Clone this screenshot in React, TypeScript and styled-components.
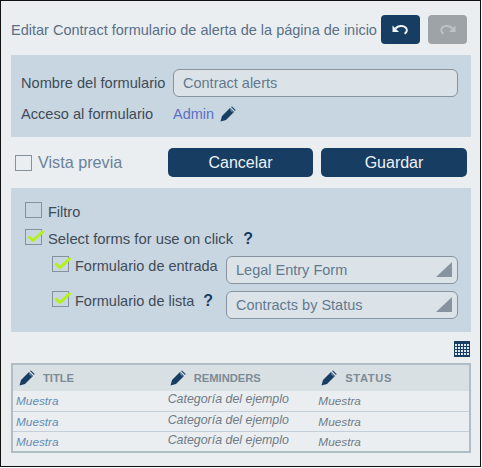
import React from "react";
import styled, { createGlobalStyle } from "styled-components";

const Global = createGlobalStyle`
  html, body { margin: 0; padding: 0; background: #fff; }
  * { box-sizing: border-box; }
`;

const Frame = styled.div`
  width: 481px;
  height: 467px;
  border: 1px solid #111;
  background: #eaeef1;
  padding: 14px 9px 0 10px;
  font-family: "Liberation Sans", Arial, sans-serif;
  font-size: 14.5px;
  color: #3f4b57;
`;

const TitleRow = styled.div`
  display: flex;
  align-items: center;
  height: 29px;
  padding-right: 4px;
`;

const Title = styled.div`
  flex: 1;
  font-size: 14.5px;
  color: #5a7087;
  white-space: nowrap;
`;

const IconButton = styled.button<{ $off?: boolean }>`
  width: 39px;
  height: 29px;
  border: 0;
  padding: 0;
  margin-left: ${(p) => (p.$off ? "8px" : "0")};
  border-radius: 4px;
  background: ${(p) => (p.$off ? "#9da3a6" : "#173d63")};
  display: flex;
  align-items: center;
  justify-content: center;
`;

const Panel = styled.div<{ $h: number; $pad: string }>`
  height: ${(p) => p.$h}px;
  margin-top: 11px;
  padding: ${(p) => p.$pad};
  background: #c8d6e1;
`;

const FormRow = styled.div<{ $mt?: number }>`
  display: flex;
  align-items: center;
  margin-top: ${(p) => p.$mt ?? 0}px;
`;

const Label = styled.div`
  width: 152px;
  font-size: 14.6px;
  color: #3f4b57;
  white-space: nowrap;
`;

const TextBox = styled.div`
  width: 285px;
  height: 28px;
  border: 1px solid #87949f;
  border-radius: 6px;
  background: #dbe3e8;
  color: #63798f;
  padding-left: 9px;
  display: flex;
  align-items: center;
`;

const AdminLink = styled.span`
  color: #5d6fc0;
  margin-right: 6px;
`;

const ActionRow = styled.div`
  display: flex;
  align-items: center;
  height: 29px;
  margin-top: 11px;
  padding: 0 4px;
`;

const Preview = styled.div`
  width: 153px;
  display: flex;
  align-items: center;
  gap: 6px;
  font-size: 16.2px;
  color: #6b8199;
`;

const Button = styled.button<{ $w: number; $ml?: number }>`
  width: ${(p) => p.$w}px;
  height: 29px;
  margin-left: ${(p) => p.$ml ?? 0}px;
  border: 0;
  border-radius: 5px;
  background: #173d63;
  color: #eef2f5;
  font-family: inherit;
  font-size: 16px;
`;

const CheckBox = styled.span`
  position: relative;
  flex: none;
  display: inline-block;
  width: 17px;
  height: 16px;
  border: 1px solid #84929d;
`;

const CheckMark = styled.svg`
  position: absolute;
  left: 1px;
  top: 0;
`;

const CheckRow = styled.div<{ $indent?: number; $mt?: number }>`
  display: flex;
  align-items: flex-start;
  margin-top: ${(p) => p.$mt ?? 0}px;
  padding-left: ${(p) => p.$indent ?? 0}px;
  gap: 6px;
  line-height: 20px;
  color: #3f4b57;
  white-space: nowrap;
`;

const OptionRow = styled(CheckRow)`
  height: 16px;
`;

const WideText = styled.span`
  font-size: 14.8px;
`;

const Help = styled.span<{ $ml: number }>`
  font-weight: 700;
  font-size: 16px;
  color: #173d63;
  margin-left: ${(p) => p.$ml}px;
`;

const SubLabel = styled.span<{ $w: number }>`
  width: ${(p) => p.$w}px;
  display: inline-flex;
  align-items: center;
`;

const Select = styled.div`
  position: relative;
  width: 232px;
  height: 28px;
  border: 1px solid #87949f;
  border-radius: 6px;
  background: #dbe3e8;
  color: #63798f;
  padding-left: 9px;
  display: flex;
  align-items: center;
`;

const Arrow = styled.span`
  position: absolute;
  right: 5px;
  bottom: 6px;
  width: 0;
  height: 0;
  border-left: 16px solid transparent;
  border-bottom: 15px solid #87949f;
`;

const GridIconRow = styled.div`
  display: flex;
  justify-content: flex-end;
  height: 16px;
  margin-top: 9px;
  margin-bottom: 6px;
  padding-right: 1px;
`;

const Table = styled.table`
  width: 460px;
  height: 90px;
  border: 2px solid #aebdc6;
  border-collapse: collapse;
  table-layout: fixed;
`;

const HeadRow = styled.tr`
  height: 27px;
  background: #d8e0e4;
`;

const Head = styled.th<{ $w: number; $sp: number }>`
  width: ${(p) => p.$w}px;
  padding: 0 0 0 6px;
  text-align: left;
  font-size: 11.2px;
  font-weight: 700;
  letter-spacing: ${(p) => p.$sp}px;
  color: #7d8b96;
  white-space: nowrap;
`;

const HeadInner = styled.span`
  display: flex;
  align-items: center;
  gap: 8px;
`;

const Row = styled.tr`
  height: 20px;
  border-top: 1px solid #c4d0d9;
  &:first-of-type { border-top: 0; }
`;

const Cell = styled.td<{ $link?: boolean; $up?: boolean }>`
  padding: ${(p) => (p.$up ? "0 0 3px 0" : "1px 0 0 0")};
  padding-left: ${(p) => (p.$link ? "3px" : "4px")};
  font-size: ${(p) => (p.$up ? "12.4px" : "11.8px")};
  font-style: italic;
  color: ${(p) => (p.$link ? "#5f8db5" : "#6f7b86")};
  white-space: nowrap;
`;

const StatusCell = styled(Cell)`
  padding-left: 3px;
`;

const Pencil = ({ size = 16 }: { size?: number }) => (
  <svg width={size} height={size} viewBox="0 0 16 16" aria-hidden="true">
    <path d="M0.5 15.5 2 10 10 2 14 6 6 14Z" fill="#173d63" />
    <path d="M11 1 12 0.4 15.6 4 15 5 Z" fill="#173d63" />
    <path d="M10 3.5 12.6 6" stroke="#9fb4c6" strokeWidth="1" fill="none" />
  </svg>
);

const Undo = ({ color }: { color: string }) => (
  <svg width="17" height="12" viewBox="0 0 17 12" aria-hidden="true">
    <path d="M3.5 4.5C6 1.8 11 1.2 13.6 3.4c2 1.8 1.6 4.6-1 6.4" fill="none" stroke={color} strokeWidth="2" />
    <path d="M0.5 1.5V8H7Z" fill={color} />
  </svg>
);

const Redo = ({ color }: { color: string }) => (
  <svg width="17" height="12" viewBox="0 0 17 12" aria-hidden="true">
    <path d="M13.5 4.5C11 1.8 6 1.2 3.4 3.4c-2 1.8-1.6 4.6 1 6.4" fill="none" stroke={color} strokeWidth="2" />
    <path d="M16.5 1.5V8H10Z" fill={color} />
  </svg>
);

const Check = () => (
  <CheckMark width="20" height="16" viewBox="0 0 20 16" aria-hidden="true">
    <path d="M1.5 6.5 6 10.5 16.5 1" fill="none" stroke="#b4f01a" strokeWidth="3" />
  </CheckMark>
);

const GridIcon = () => (
  <svg width="16" height="16" viewBox="0 0 16 16" aria-hidden="true">
    <rect width="16" height="16" fill="#173d63" />
    {[3, 6, 9, 12].map((y) =>
      [1, 4, 7, 10, 13].map((x) => (
        <rect key={`${x}-${y}`} x={x} y={y} width="2" height="2" fill="#dfe8ee" />
      ))
    )}
  </svg>
);

const columns = [
  { name: "TITLE", width: 151, spacing: 0 },
  { name: "REMINDERS", width: 151, spacing: 0 },
  { name: "STATUS", width: 154, spacing: 0.6 },
];

export default function App() {
  return (
    <Frame>
      <Global />
      <TitleRow>
        <Title>Editar Contract formulario de alerta de la página de inicio</Title>
        <IconButton><Undo color="#f2f5f7" /></IconButton>
        <IconButton $off><Redo color="#bcc2c5" /></IconButton>
      </TitleRow>
      <Panel $h={82} $pad="14px 0 0 10px">
        <FormRow>
          <Label>Nombre del formulario</Label>
          <TextBox>Contract alerts</TextBox>
        </FormRow>
        <FormRow $mt={9}>
          <Label>Acceso al formulario</Label>
          <AdminLink>Admin</AdminLink>
          <Pencil />
        </FormRow>
      </Panel>
      <ActionRow>
        <Preview><CheckBox />Vista previa</Preview>
        <Button $w={145}>Cancelar</Button>
        <Button $w={146} $ml={8}>Guardar</Button>
      </ActionRow>
      <Panel $h={144} $pad="14px 0 0 14px">
        <OptionRow><CheckBox />Filtro</OptionRow>
        <OptionRow $mt={11}>
          <CheckBox><Check /></CheckBox>
          <WideText>Select forms for use on click <Help $ml={6}>?</Help></WideText>
        </OptionRow>
        <CheckRow $indent={27} $mt={11}>
          <CheckBox><Check /></CheckBox>
          <SubLabel $w={145}>Formulario de entrada</SubLabel>
          <Select>Legal Entry Form<Arrow /></Select>
        </CheckRow>
        <CheckRow $indent={27} $mt={7}>
          <CheckBox><Check /></CheckBox>
          <SubLabel $w={145}>Formulario de lista <Help $ml={9}>?</Help></SubLabel>
          <Select>Contracts by Status<Arrow /></Select>
        </CheckRow>
      </Panel>
      <GridIconRow><GridIcon /></GridIconRow>
      <Table>
        <thead>
          <HeadRow>
            {columns.map((c) => (
              <Head key={c.name} $w={c.width} $sp={c.spacing}>
                <HeadInner><Pencil />{c.name}</HeadInner>
              </Head>
            ))}
          </HeadRow>
        </thead>
        <tbody>
          {[0, 1, 2].map((r) => (
            <Row key={r}>
              <Cell $link>Muestra</Cell>
              <Cell $up>Categoría del ejemplo</Cell>
              <StatusCell>Muestra</StatusCell>
            </Row>
          ))}
        </tbody>
      </Table>
    </Frame>
  );
}
